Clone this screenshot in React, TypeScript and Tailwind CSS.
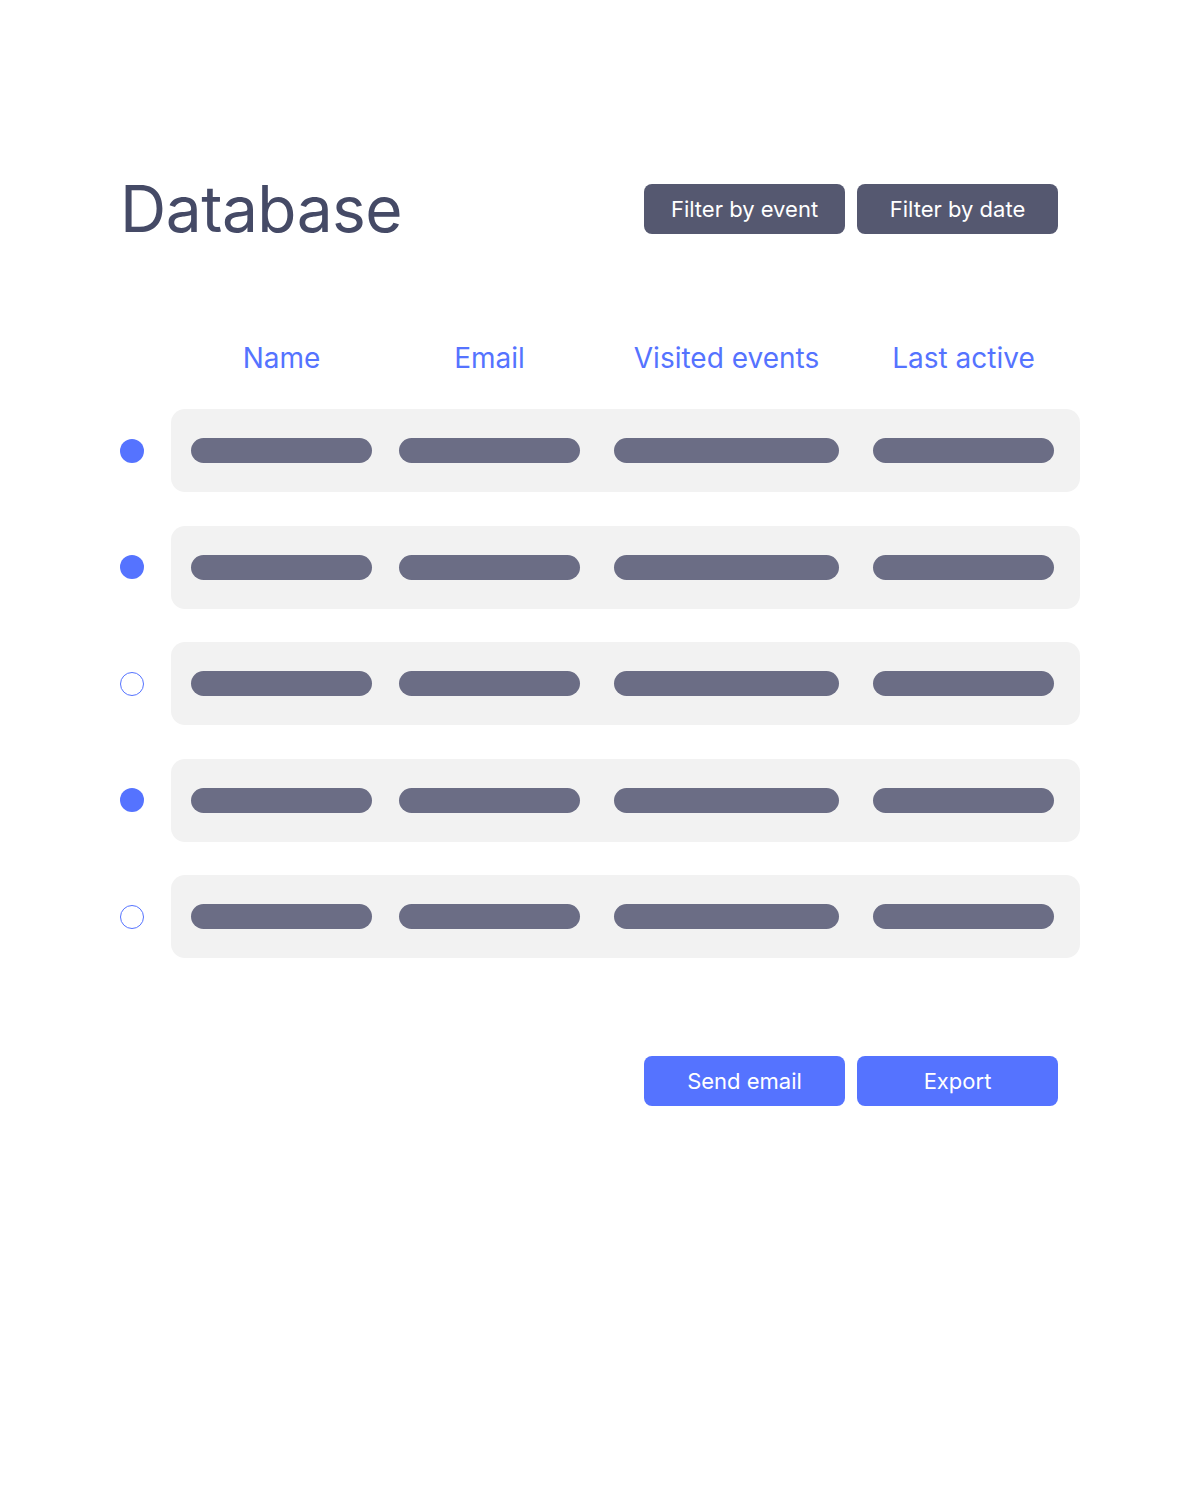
import React from 'react';

type Row = { active: boolean };

const rows: Row[] = [
  { active: true },
  { active: true },
  { active: false },
  { active: true },
  { active: false },
];

const columns = [
  { label: 'Name', width: 'w-[181px]', gap: '' },
  { label: 'Email', width: 'w-[181px]', gap: 'ml-[27px]' },
  { label: 'Visited events', width: 'w-[225px]', gap: 'ml-[34px]' },
  { label: 'Last active', width: 'w-[181px]', gap: 'ml-[34px]' },
];

const Dot: React.FC<{ active: boolean }> = ({ active }) =>
  active ? (
    <span className="block w-6 h-6 rounded-full bg-[#5573ff] shrink-0" />
  ) : (
    <span className="block w-6 h-6 rounded-full border-[1.5px] border-[#5573ff] bg-white shrink-0" />
  );

export default function App() {
  return (
    <div
      className="w-[1200px] h-[1500px] bg-white px-[120px] pt-[177px]"
      style={{ fontFamily: 'Inter, "Noto Sans", sans-serif' }}
    >
      <div className="flex items-center justify-between pr-[22px]">
        <h1 className="text-[64px] leading-none text-[#454a66] tracking-[-0.5px] font-normal">Database</h1>
        <div className="flex gap-3">
          <button className="w-[201px] h-[50px] rounded-lg bg-[#555870] text-white text-[22px]">
            Filter by event
          </button>
          <button className="w-[201px] h-[50px] rounded-lg bg-[#555870] text-white text-[22px]">
            Filter by date
          </button>
        </div>
      </div>

      <div className="mt-[103px] flex pl-[71px] text-[28px] text-[#5573ff] leading-none">
        {columns.map((c) => (
          <div key={c.label} className={`${c.width} ${c.gap} text-center whitespace-nowrap flex justify-center`}>
            {c.label}
          </div>
        ))}
      </div>

      <div className="mt-[37px] flex flex-col gap-[33.5px]">
        {rows.map((r, i) => (
          <div key={i} className="flex items-center">
            <Dot active={r.active} />
            <div className="ml-[27px] flex-1 h-[83px] rounded-[14px] bg-[#f2f2f2] flex items-center pl-[20px]">
              {columns.map((c) => (
                <div key={c.label} className={`${c.width} ${c.gap} h-[25px] rounded-full bg-[#6b6d85]`} />
              ))}
            </div>
          </div>
        ))}
      </div>

      <div className="mt-[98px] flex justify-end gap-3 pr-[22px]">
        <button className="w-[201px] h-[50px] rounded-lg bg-[#5573ff] text-white text-[22px]">Send email</button>
        <button className="w-[201px] h-[50px] rounded-lg bg-[#5573ff] text-white text-[22px]">Export</button>
      </div>
    </div>
  );
}
